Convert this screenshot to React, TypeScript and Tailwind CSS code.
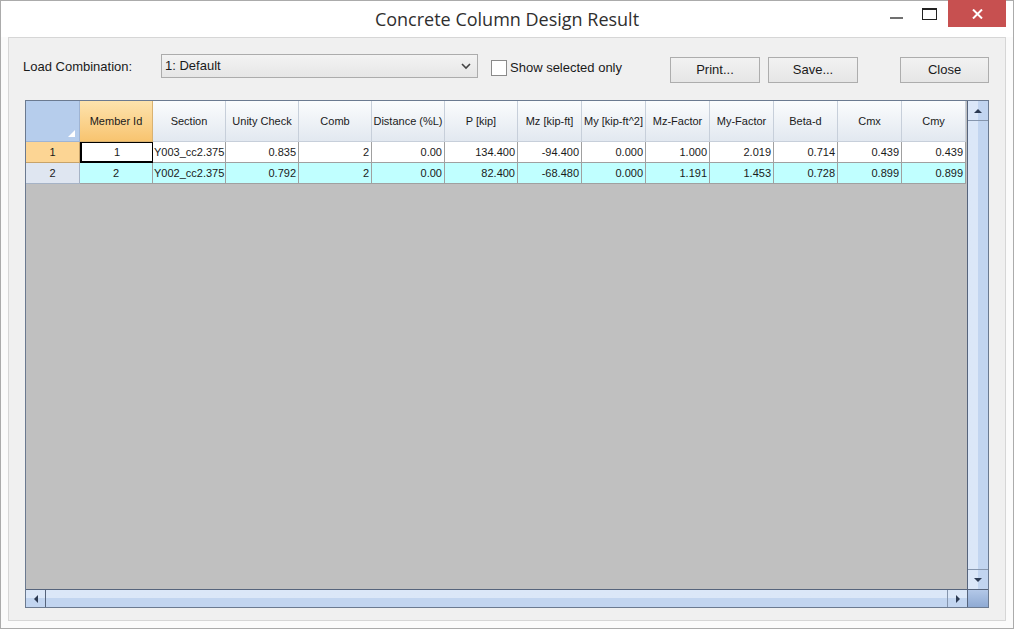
import React from "react";

const columns = [
    { name: "Member Id", w: 73, align: "center" },
    { name: "Section", w: 73, align: "left" },
    { name: "Unity Check", w: 73, align: "right" },
    { name: "Comb", w: 73, align: "right" },
    { name: "Distance (%L)", w: 73, align: "right" },
    { name: "P [kip]", w: 73, align: "right" },
    { name: "Mz [kip-ft]", w: 64, align: "right" },
    { name: "My [kip-ft^2]", w: 64, align: "right" },
    { name: "Mz-Factor", w: 64, align: "right" },
    { name: "My-Factor", w: 64, align: "right" },
    { name: "Beta-d", w: 64, align: "right" },
    { name: "Cmx", w: 64, align: "right" },
    { name: "Cmy", w: 64, align: "right" },
];

const rows = [
    ["1", "Y003_cc2.375", "0.835", "2", "0.00", "134.400", "-94.400", "0.000", "1.000", "2.019", "0.714", "0.439", "0.439"],
    ["2", "Y002_cc2.375", "0.792", "2", "0.00", "82.400", "-68.480", "0.000", "1.191", "1.453", "0.728", "0.899", "0.899"],
];

function TitleBar() {
    return (
        <div className="relative flex h-[36px] shrink-0 items-center justify-center bg-white">
            <span className="text-[18px] text-[#2f2f2f]" style={{ fontFamily: '"Open Sans", sans-serif' }}>
                Concrete Column Design Result
            </span>
            <div className="absolute right-[7px] top-[-1px] flex items-start">
                <div className="mt-[17px] mr-[19px] h-[2px] w-[13px] bg-[#707070]" />
                <div className="mt-[8px] mr-[11px] h-[12px] w-[15px] border border-t-2 border-[#222]" />
                <div className="flex h-[27px] w-[58px] items-center justify-center bg-[#c75050]">
                    <svg width="11" height="10" viewBox="0 0 11 10">
                        <path d="M1 0.5 L10 9.5 M10 0.5 L1 9.5" stroke="white" strokeWidth="2" />
                    </svg>
                </div>
            </div>
        </div>
    );
}

function Button({ label, w }: { label: string; w: number }) {
    return (
        <div
            className="flex h-[26px] items-center justify-center border border-[#adadad] bg-gradient-to-b from-[#f2f2f2] to-[#e6e6e6] text-[13px] text-[#1a1a1a]"
            style={{ width: w }}
        >
            {label}
        </div>
    );
}

function Toolbar() {
    return (
        <div className="flex h-[62px] shrink-0 items-start text-[13px] text-[#1a1a1a]">
            <div className="ml-[14px] mt-[19px] w-[138px]">Load Combination:</div>
            <div className="mt-[16px] flex h-[24px] w-[317px] items-center justify-between border border-[#acacac] bg-gradient-to-b from-[#f3f3f3] to-[#e6e6e6] pl-[3px] pr-[6px]">
                <span>1: Default</span>
                <svg width="10" height="7" viewBox="0 0 10 7">
                    <path d="M1 1 L5 5 L9 1" fill="none" stroke="#444" strokeWidth="1.6" />
                </svg>
            </div>
            <div className="ml-[13px] mt-[20px] flex w-[179px] items-center">
                <div className="h-[16px] w-[16px] border border-[#8a8a8a] bg-white" />
                <span className="ml-[3px]">Show selected only</span>
            </div>
            <div className="mt-[19px] flex">
                <Button label="Print..." w={90} />
                <div className="w-[8px]" />
                <Button label="Save..." w={90} />
                <div className="w-[42px]" />
                <Button label="Close" w={89} />
            </div>
        </div>
    );
}

function Arrow({ dir }: { dir: "up" | "down" | "left" | "right" }) {
    const d = {
        up: "M0 5 L4 1 L8 5 Z",
        down: "M0 1 L8 1 L4 5 Z",
        left: "M5 0 L5 8 L1 4 Z",
        right: "M1 0 L1 8 L5 4 Z",
    }[dir];
    const vertical = dir === "up" || dir === "down";
    return (
        <svg width={vertical ? 8 : 6} height={vertical ? 6 : 8} viewBox={vertical ? "0 0 8 6" : "0 0 6 8"}>
            <path d={d} fill="#2c3a52" />
        </svg>
    );
}

function Grid() {
    return (
        <div className="flex h-[508px] w-[964px] border border-[#6b7a90] bg-[#c0c0c0] text-[11px] text-[#1a1a1a]">
            <div className="flex w-[941px] flex-col">
                {/* header */}
                <div className="flex h-[41px] shrink-0">
                    <div className="relative h-full w-[54px] border-r border-b border-[#9fb4d3] bg-[#b6cdec]">
                        <svg className="absolute bottom-[4px] right-[4px]" width="7" height="7" viewBox="0 0 7 7">
                            <path d="M7 0 L7 7 L0 7 Z" fill="#ffffff" />
                        </svg>
                    </div>
                    {columns.map((c, i) => (
                        <div
                            key={c.name}
                            className={
                                i === 0
                                    ? "flex h-full items-center justify-center border-r border-b border-[#d9b271] bg-gradient-to-b from-[#fde3ad] to-[#f8c46f]"
                                    : "flex h-full items-center justify-center border-r border-b border-[#c7cfda] bg-gradient-to-b from-[#fbfcfd] to-[#e2e8f0]"
                            }
                            style={{ width: c.w }}
                        >
                            {c.name}
                        </div>
                    ))}
                </div>
                {/* rows */}
                {rows.map((r, ri) => (
                    <div key={ri} className="flex h-[21px] shrink-0">
                        <div
                            className={
                                ri === 0
                                    ? "flex h-full w-[54px] items-center justify-center border-r border-b border-[#c7a36a] bg-[#fcd594]"
                                    : "flex h-full w-[54px] items-center justify-center border-r border-b border-[#a6b3c6] bg-[#dfe6f1]"
                            }
                        >
                            {r[0]}
                        </div>
                        {r.map((v, ci) => (
                            <div
                                key={ci}
                                className={
                                    (ri === 0 ? "bg-white " : "bg-[#c0ffff] ") +
                                    (ci === 0
                                        ? "justify-center "
                                        : ci === 1
                                          ? "justify-start pl-[1px] "
                                          : "justify-end pr-[2px] ") +
                                    (ri === 0 && ci === 0
                                        ? "border-[2px] border-t-[1px] border-r-[1px] border-black "
                                        : "border-r border-b border-[#a0a0a0] ") +
                                    "flex h-full items-center overflow-hidden whitespace-nowrap"
                                }
                                style={{ width: columns[ci].w }}
                            >
                                {v}
                            </div>
                        ))}
                    </div>
                ))}
                <div className="flex-1" />
                {/* horizontal scrollbar */}
                <div className="flex h-[18px] shrink-0 border-t border-[#56647c]">
                    <div className="flex w-[20px] items-center justify-center border-r border-[#56647c] bg-gradient-to-b from-[#dbe7f8] from-50% to-[#c2d5f0] to-50%">
                        <Arrow dir="left" />
                    </div>
                    <div className="flex-1 bg-gradient-to-b from-[#dbe7f8] from-50% to-[#c2d5f0] to-50%" />
                    <div className="flex w-[20px] items-center justify-center border-l border-[#8595ad] bg-gradient-to-b from-[#dbe7f8] from-50% to-[#c2d5f0] to-50%">
                        <Arrow dir="right" />
                    </div>
                </div>
            </div>
            {/* vertical scrollbar */}
            <div className="flex w-[21px] flex-col border-l border-[#56647c]">
                <div className="flex h-[20px] shrink-0 items-center justify-center border-b border-[#8595ad] bg-gradient-to-r from-[#dbe7f8] from-50% to-[#c2d5f0] to-50%">
                    <Arrow dir="up" />
                </div>
                <div className="flex-1 bg-gradient-to-r from-[#dbe7f8] from-50% to-[#c2d5f0] to-50%" />
                <div className="flex h-[20px] shrink-0 items-center justify-center border-t border-[#8595ad] bg-gradient-to-r from-[#dbe7f8] from-50% to-[#c2d5f0] to-50%">
                    <Arrow dir="down" />
                </div>
                <div className="h-[18px] shrink-0 border-t border-[#56647c] bg-gradient-to-b from-[#b3c8e8] to-[#8faad3]" />
            </div>
        </div>
    );
}

export default function App() {
    return (
        <div
            className="flex h-[629px] w-[1014px] flex-col border border-[#ababab] bg-[#fbfbfb]"
            style={{ fontFamily: '"Liberation Sans", Arial, sans-serif' }}
        >
            <TitleBar />
            <div className="mx-[7px] mb-[7px] flex flex-1 flex-col border border-[#d6d6d6] bg-[#f0f0f0]">
                <Toolbar />
                <div className="ml-[16px]">
                    <Grid />
                </div>
            </div>
        </div>
    );
}
